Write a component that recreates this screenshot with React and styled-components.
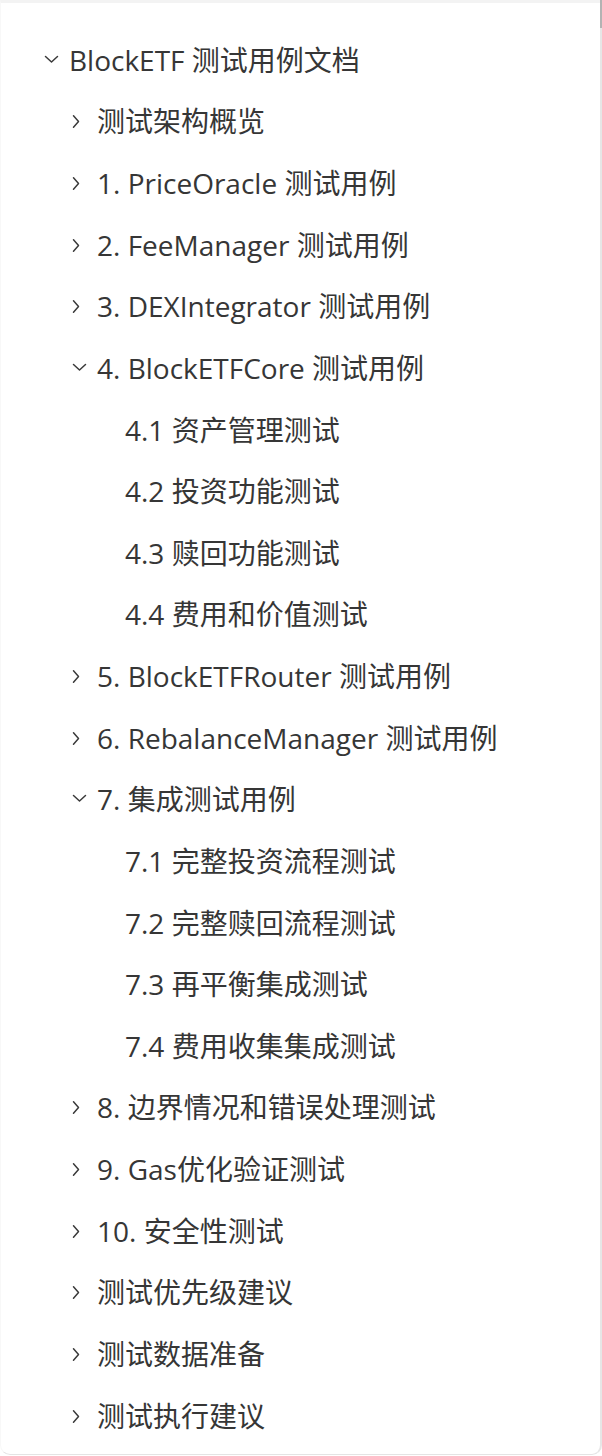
import React from 'react';
import styled, { createGlobalStyle } from 'styled-components';

const GlobalStyle = createGlobalStyle`
  html, body {
    margin: 0;
    padding: 0;
    background: #ffffff;
  }
  body {
    font-family: "Open Sans", "Noto Sans CJK SC", sans-serif;
  }
`;

const Panel = styled.nav`
  position: relative;
  box-sizing: border-box;
  width: 602px;
  height: 1455px;
  border-top: 3px solid #f3f3f3;
  border-right: 2px solid #e6e6e6;
  border-bottom: 1px solid #e4e4e4;
  border-left: 1px solid #f8f8f8;
  border-bottom-left-radius: 10px;
  border-bottom-right-radius: 10px;
  padding-top: 26px;

  &::after {
    content: '';
    position: absolute;
    top: -3px;
    right: -2px;
    width: 2px;
    height: 28px;
    background: #b3b3b3;
  }
`;

const List = styled.ul`
  list-style: none;
  margin: 0;
  padding: 0;
`;

const Row = styled.li`
  display: flex;
  align-items: center;
  height: 61.64px;
  padding-left: ${p => 40 + p.$level * 28}px;
  color: #363636;
  font-size: 28px;
  font-weight: 400;
  white-space: nowrap;
  cursor: pointer;
`;

const Toggle = styled.span`
  display: flex;
  align-items: center;
  justify-content: center;
  width: 20px;
  height: 20px;
  margin-right: 8px;
  flex: none;
`;

const Label = styled.span`
  line-height: 1;
`;

function Chevron({ open }) {
  return (
    <svg width="20" height="20" viewBox="0 0 20 20" fill="none" stroke="#3a3a3a" strokeWidth="1.5" strokeLinecap="round" strokeLinejoin="round">
      {open
        ? <path d="M4.5 6.5 L10.5 12 L16.5 6.5" />
        : <path d="M4.5 4.8 L9.5 10.5 L4.5 16.2" />}
    </svg>
  );
}

const tree = [
  {
    title: 'BlockETF 测试用例文档',
    open: true,
    children: [
      { title: '测试架构概览', children: [] },
      { title: '1. PriceOracle 测试用例', children: [] },
      { title: '2. FeeManager 测试用例', children: [] },
      { title: '3. DEXIntegrator 测试用例', children: [] },
      {
        title: '4. BlockETFCore 测试用例',
        open: true,
        children: [
          { title: '4.1 资产管理测试' },
          { title: '4.2 投资功能测试' },
          { title: '4.3 赎回功能测试' },
          { title: '4.4 费用和价值测试' },
        ],
      },
      { title: '5. BlockETFRouter 测试用例', children: [] },
      { title: '6. RebalanceManager 测试用例', children: [] },
      {
        title: '7. 集成测试用例',
        open: true,
        children: [
          { title: '7.1 完整投资流程测试' },
          { title: '7.2 完整赎回流程测试' },
          { title: '7.3 再平衡集成测试' },
          { title: '7.4 费用收集集成测试' },
        ],
      },
      { title: '8. 边界情况和错误处理测试', children: [] },
      { title: '9. Gas优化验证测试', children: [] },
      { title: '10. 安全性测试', children: [] },
      { title: '测试优先级建议', children: [] },
      { title: '测试数据准备', children: [] },
      { title: '测试执行建议', children: [] },
    ],
  },
];

function flatten(nodes, level, out) {
  nodes.forEach(node => {
    out.push({ ...node, level });
    if (node.open && node.children) flatten(node.children, level + 1, out);
  });
  return out;
}

export default function App() {
  const rows = flatten(tree, 0, []);
  return (
    <>
      <GlobalStyle />
      <Panel>
        <List>
          {rows.map((row, i) => (
            <Row key={i} $level={row.level}>
              <Toggle>{row.children && <Chevron open={row.open} />}</Toggle>
              <Label>{row.title}</Label>
            </Row>
          ))}
        </List>
      </Panel>
    </>
  );
}
